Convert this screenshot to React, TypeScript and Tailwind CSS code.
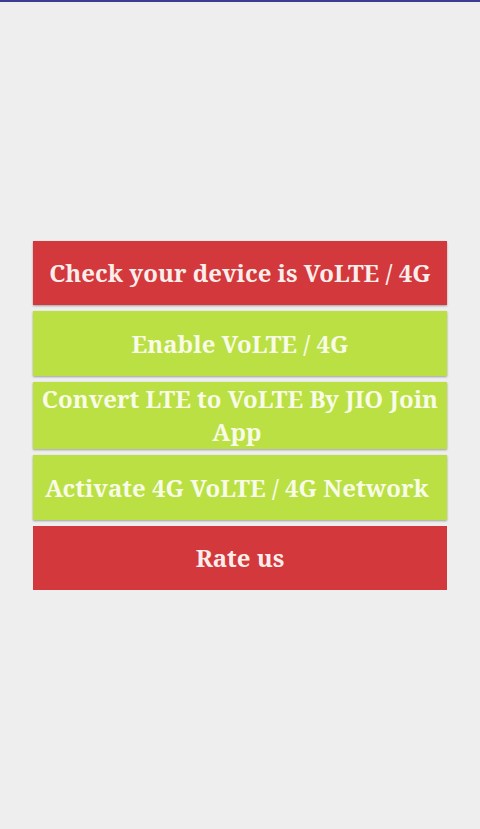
const buttonBase =
  "flex w-full items-center justify-center px-2 pb-px font-['Noto_Serif','Droid_Serif','DejaVu_Serif','Liberation_Serif',serif] text-[24px] leading-[33px] font-bold text-center";
const red = "min-h-16 bg-[#d2383c] text-[#fbeeea]";
const green = "min-h-[65px] bg-[#bae043] text-[#f8fbe6]";
const raised = "shadow-[0_1px_2px_#00000055]";

export default function App() {
  return (
    <main className="flex min-h-screen flex-col border-t-2 border-[#3a3d92] bg-[#eeeeee]">
      <div className="flex flex-1 flex-col justify-center gap-[6px] px-[33px]">
        <button className={`${buttonBase} ${red} ${raised}`}>Check your device is VoLTE / 4G</button>
        <button className={`${buttonBase} ${green} ${raised}`}>Enable VoLTE / 4G</button>
        <button className={`${buttonBase} ${green} ${raised}`}>{"Convert LTE to VoLTE By JIO Join App\u00a0"}</button>
        <button className={`${buttonBase} ${green} ${raised}`}>{"Activate 4G VoLTE / 4G Network\u00a0"}</button>
        <button className={`${buttonBase} ${red}`}>Rate us</button>
      </div>
    </main>
  );
}
